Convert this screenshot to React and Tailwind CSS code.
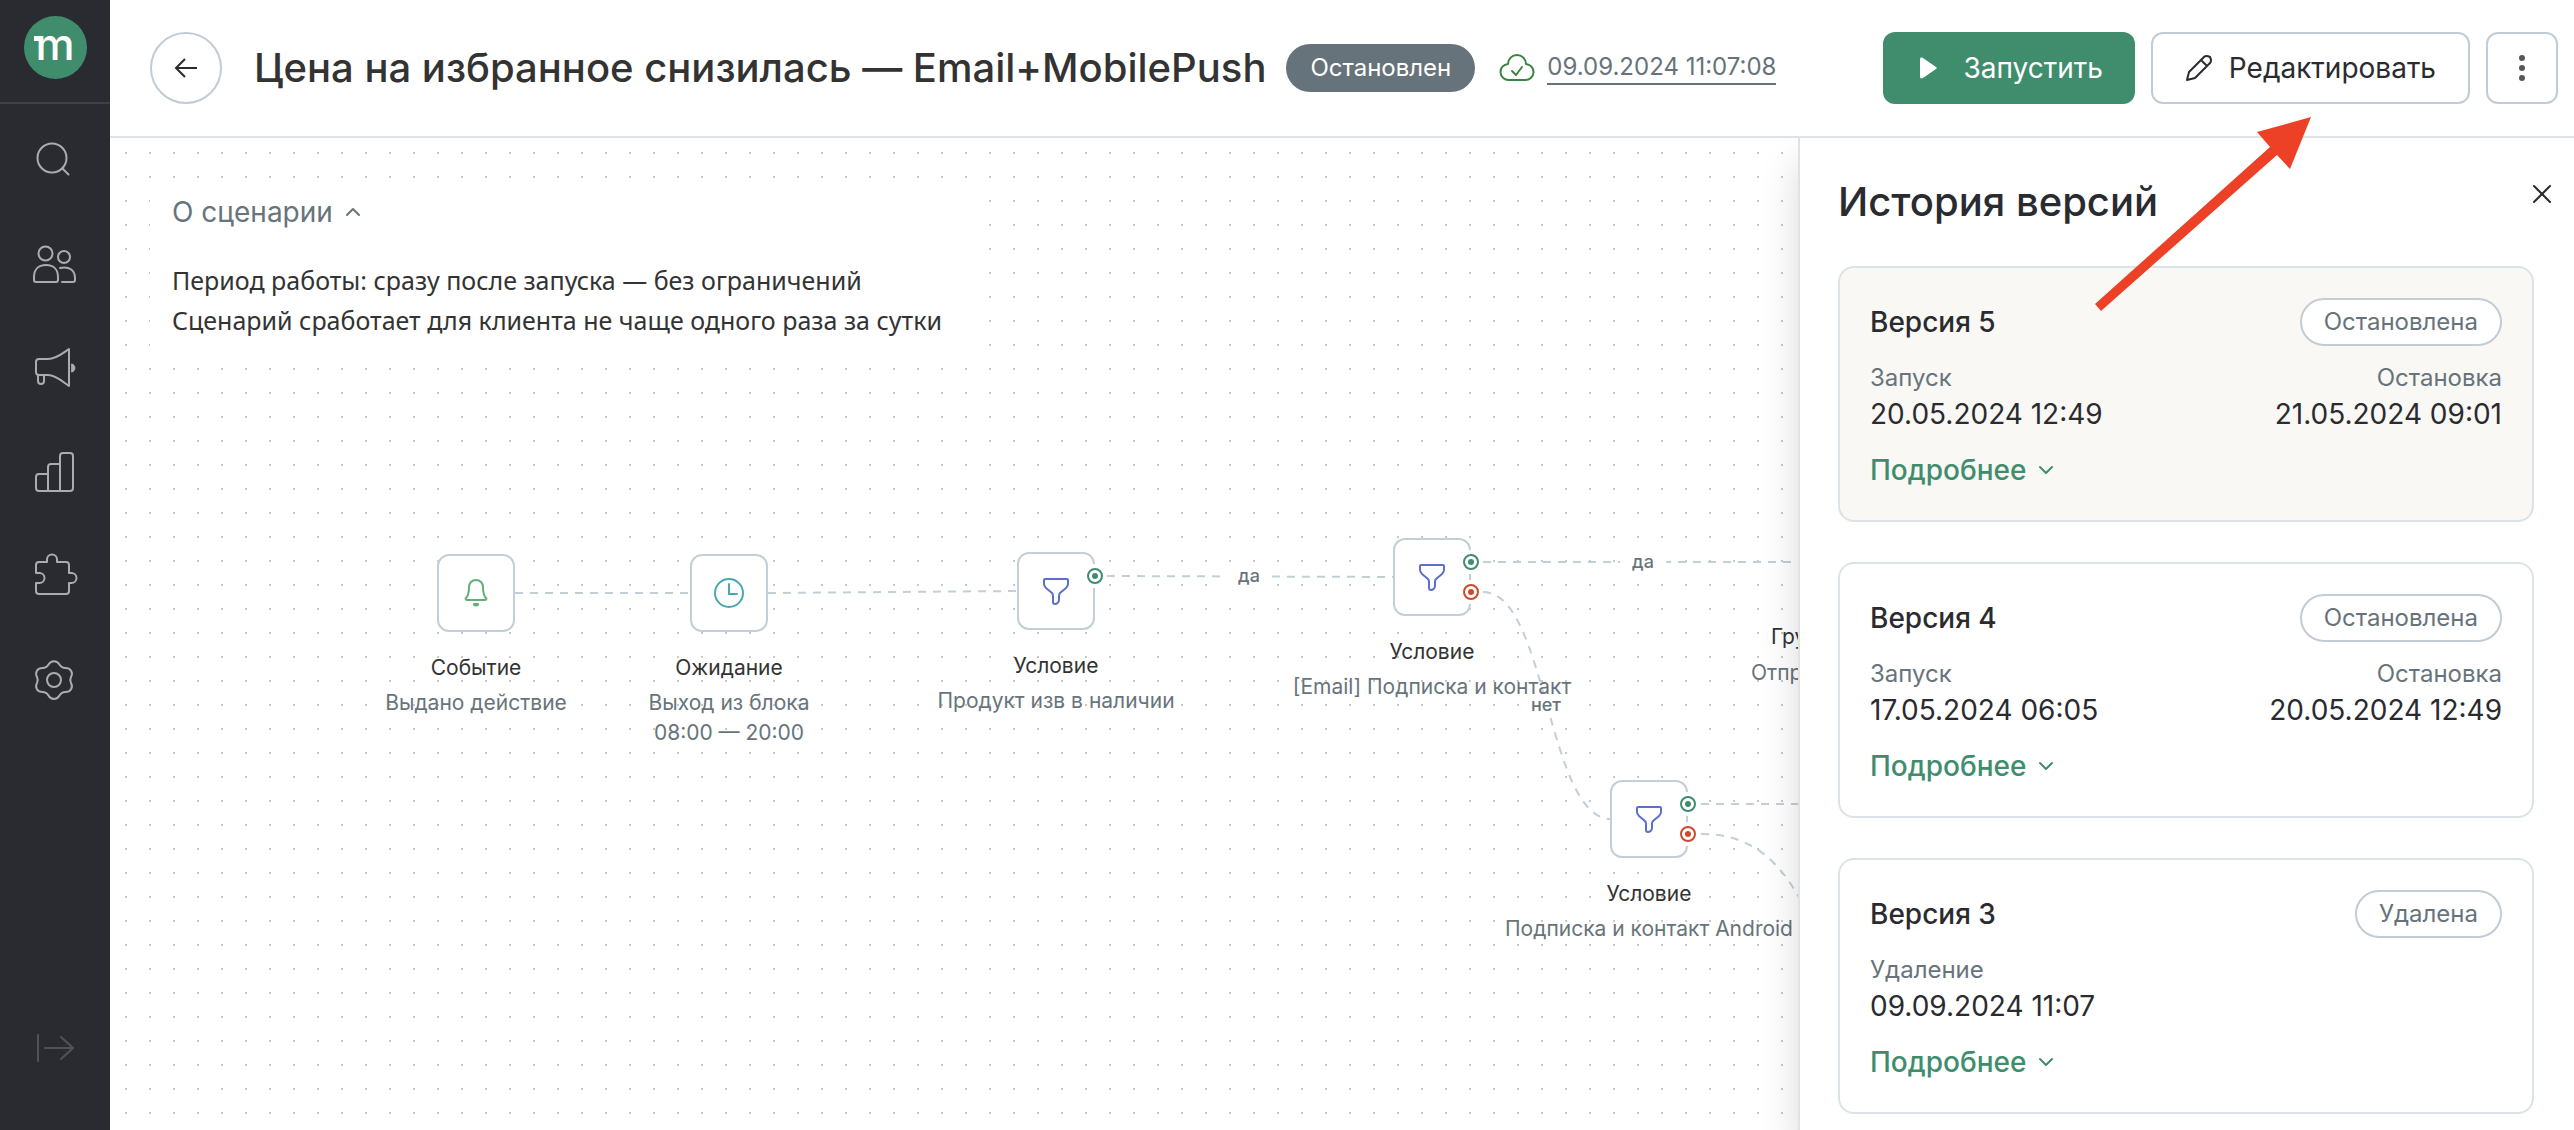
import { ChevronDown, ChevronUp, X } from 'lucide-react';

const versions = [
  {
    name: 'Версия 5',
    status: 'Остановлена',
    current: true,
    dates: [
      { label: 'Запуск', value: '20.05.2024 12:49' },
      { label: 'Остановка', value: '21.05.2024 09:01' },
    ],
  },
  {
    name: 'Версия 4',
    status: 'Остановлена',
    dates: [
      { label: 'Запуск', value: '17.05.2024 06:05' },
      { label: 'Остановка', value: '20.05.2024 12:49' },
    ],
  },
  {
    name: 'Версия 3',
    status: 'Удалена',
    dates: [{ label: 'Удаление', value: '09.09.2024 11:07' }],
  },
];

// Coordinates are relative to the canvas, x/y is the top left corner of the square
const nodes = [
  { id: 1, x: 327, y: 416, icon: 'bell', title: 'Событие', lines: ['Выдано действие'], ports: [] },
  { id: 2, x: 580, y: 416, icon: 'clock', title: 'Ожидание', lines: ['Выход из блока', '08:00 — 20:00'], ports: [] },
  { id: 3, x: 907, y: 414, icon: 'filter', title: 'Условие', lines: ['Продукт изв в наличии'], ports: ['yes'] },
  { id: 4, x: 1283, y: 400, icon: 'filter', title: 'Условие', lines: ['[Email] Подписка и контакт'], ports: ['yes', 'no'] },
  { id: 5, x: 1500, y: 642, icon: 'filter', title: 'Условие', lines: ['Подписка и контакт Android'], ports: ['yes', 'no'] },
];

const edges = [
  'M405 455H581',
  'M658 455L907 453',
  'M997 438L1283 439',
  'M1373 424H1700',
  'M1373 454C1437 454 1437 681 1501 681',
  'M1591 666H1700',
  'M1591 696C1642 696 1675 722 1705 792',
];

const edgeLabels = [
  { x: 1139, y: 438, text: 'да' },
  { x: 1533, y: 424, text: 'да' },
  { x: 1436, y: 567, text: 'нет' },
];

function SideIcon({ name }) {
  const paths = {
    search: (
      <>
        <circle cx="19" cy="20" r="14.5" />
        <path d="M29.5 30.5l6 6" />
      </>
    ),
    people: (
      <>
        <circle cx="12.5" cy="11.5" r="7" />
        <circle cx="31" cy="15" r="6" />
        <path d="M1 35c0-7 4-12 12-12s12 5 12 12v3c0 1-1 2-2 2H3c-1 0-2-1-2-2z" />
        <path d="M27 26c9-2 15 2 15 10v2c0 1-1 2-2 2H29" />
      </>
    ),
    megaphone: (
      <>
        <path d="M3 16c0-2 1-3 3-3h9c8 0 15-6 21-10v37c-6-4-13-11-21-11H6c-2 0-3-1-3-3z" />
        <path d="M5 29v6c0 4 6 4 6 0v-6" />
        <path d="M39 18c4 1 4 7 0 8z" fill="currentColor" strokeWidth="1" />
      </>
    ),
    chart: (
      <>
        <path d="M15 41H6c-2 0-3-1-3-3V27c0-2 1-3 3-3h9" />
        <path d="M15 41V17c0-2 1-3 3-3h9v27z" />
        <path d="M27 41V6c0-2 1-3 3-3h7c2 0 3 1 3 3v32c0 2-1 3-3 3z" />
      </>
    ),
    puzzle: (
      <path d="M3 19v-8c0-2 1-3 3-3h8V5.500a5 5 0 0 1 10 0V8h9c2 0 3 1 3 3v8h2.500a5 5 0 0 1 0 10H36v8c0 2-1 3-3 3H6c-2 0-3-1-3-3v-8h3.500a5 5 0 0 0 0-10z" />
    ),
    gear: (
      <>
        <circle cx="21" cy="22" r="7" />
        <path d="M15.500 6.500c2.500-4.500 8.500-4.500 11 0 1.500 2.500 3.500 3.500 6 3.500 5 0 8 4.500 5.500 9-1 2-1 4 0 6 2.500 4.500-.5 9-5.500 9-2.500 0-4.500 1-6 3.500-2.500 4.500-8.500 4.500-11 0-1.500-2.500-3.500-3.500-6-3.500-5 0-8-4.500-5.500-9 1-2 1-4 0-6-2.500-4.500.5-9 5.500-9 2.500 0 4.500-1 6-3.500z" />
      </>
    ),
    expand: (
      <>
        <path d="M5 11v26" />
        <path d="M12 24h28M28 13l12 11-12 11" />
      </>
    ),
  };

  return (
    <svg className="size-11 overflow-visible" viewBox="0 0 44 44" fill="none" stroke="currentColor" strokeWidth="2" strokeLinecap="round" strokeLinejoin="round" aria-hidden="true">
      {paths[name]}
    </svg>
  );
}

function NodeIcon({ name }) {
  if (name === 'bell') {
    return (
      <svg className="size-8 text-[#62ae77]" viewBox="0 0 32 32" fill="none" stroke="currentColor" strokeWidth="2" strokeLinejoin="round" aria-hidden="true">
        <path d="M9 10c0-4 3-7 7-7s7 3 7 7c0 7 1 9 3 11 1 1 0 2-1 2H7c-1 0-2-1-1-2 2-2 3-4 3-11z" />
        <path d="M14 27h4c0 2-4 2-4 0z" fill="currentColor" />
      </svg>
    );
  }
  if (name === 'clock') {
    return (
      <svg className="size-8 text-[#47a8af]" viewBox="0 0 32 32" fill="none" stroke="currentColor" strokeWidth="2" strokeLinecap="round" aria-hidden="true">
        <circle cx="16" cy="16" r="14" />
        <path d="M16 7v10h8" />
      </svg>
    );
  }
  return (
    <svg className="size-8 text-[#5a70cc]" viewBox="0 0 32 32" fill="none" stroke="currentColor" strokeWidth="2" strokeLinejoin="round" aria-hidden="true">
      <path d="M5 4h22c1 0 1 1 1 1v4c0 2-1 3-2 4l-6 5c-1 1-1 2-1 3v4c0 2-2 4-4 4-1 0-2 0-2-2v-6c0-1 0-2-1-3l-6-5C5 12 4 11 4 9V5s0-1 1-1z" />
    </svg>
  );
}

function Port({ type }) {
  return (
    <span className="flex size-6 items-center justify-center rounded-full bg-white">
      <span className={`flex size-4 items-center justify-center rounded-full border-2 ${type === 'yes' ? 'border-[#3f8d6e]' : 'border-[#d04a2a]'}`}>
        <span className={`size-1.5 rounded-full ${type === 'yes' ? 'bg-[#3f8d6e]' : 'bg-[#d04a2a]'}`} />
      </span>
    </span>
  );
}

function FlowNode({ node }) {
  return (
    <div className="absolute flex w-[78px] flex-col items-center" style={{ left: node.x, top: node.y }}>
      <div className="relative flex size-[78px] items-center justify-center rounded-xl border-2 border-[#c3cfd7] bg-white">
        <NodeIcon name={node.icon} />
        <div className="absolute top-2.5 -right-3.5 flex flex-col gap-1.5">
          {node.ports.map((type) => (
            <Port key={type} type={type} />
          ))}
        </div>
      </div>
      <p className="mt-5 text-[21px] leading-8 whitespace-nowrap text-[#333]">{node.title}</p>
      <div className="mt-1 text-center text-[21px] leading-[30px] whitespace-nowrap text-[#67747b]">
        {node.lines.map((line) => (
          <p key={line}>{line}</p>
        ))}
      </div>
    </div>
  );
}

function Sidebar() {
  const items = [
    ['search', 'Поиск'],
    ['people', 'Клиенты'],
    ['megaphone', 'Кампании'],
    ['chart', 'Отчёты'],
    ['puzzle', 'Интеграции'],
    ['gear', 'Настройки'],
  ];

  return (
    <nav className="flex w-[110px] shrink-0 flex-col items-center bg-[#2a2b30] text-[#acacae]">
      <a href="#" className="flex h-[104px] w-full justify-center border-b-2 border-[#404146] pt-4">
        <span className="relative flex size-[63px] items-center justify-center rounded-full bg-[#408d6e] pb-2 text-[44px] leading-none font-medium text-white">
          m
          <span className="absolute top-5 left-2.5 size-[5px] bg-white" />
        </span>
      </a>
      <div className="flex flex-col pt-1">
        {items.map(([name, label]) => (
          <button key={name} type="button" aria-label={label} className="flex h-[104px] w-[110px] items-center justify-center">
            <SideIcon name={name} />
          </button>
        ))}
      </div>
      <button type="button" aria-label="Развернуть меню" className="mt-auto mb-8 flex h-[104px] w-full items-center justify-center text-[#515257]">
        <SideIcon name="expand" />
      </button>
    </nav>
  );
}

function Header() {
  return (
    <header className="z-10 flex h-[138px] shrink-0 items-center border-b-2 border-[#dde3e7] bg-white pr-4 pl-10">
      <button type="button" aria-label="Назад" className="flex size-[72px] items-center justify-center rounded-full border-2 border-[#c1ccd5] text-[#2a2b30]">
        <svg className="size-6" viewBox="0 0 24 24" fill="none" stroke="currentColor" strokeWidth="2" aria-hidden="true">
          <path d="M23 12H2M11 3l-9 9 9 9" />
        </svg>
      </button>
      <h1 className="ml-8 text-[40px] leading-[48px] font-medium whitespace-nowrap text-[#333]">
        Цена на избранное снизилась — Email+MobilePush
      </h1>
      <span className="ml-5 flex h-12 items-center rounded-full bg-[#67737a] px-6 text-2xl text-white">Остановлен</span>
      <svg className="ml-6 h-8 w-9 text-[#3a8440]" viewBox="0 0 36 32" fill="none" stroke="currentColor" strokeWidth="2" strokeLinecap="round" strokeLinejoin="round" aria-hidden="true">
        <path d="M10 28a8 8 0 0 1-1-16a9 9 0 0 1 18 0a8 8 0 0 1-1 16z" />
        <path d="M13 19l4 4 6-8" />
      </svg>
      <a href="#" className="ml-3 border-b-2 border-[#67737a] text-2xl text-[#67737a]">09.09.2024 11:07:08</a>
      <div className="ml-auto flex gap-4 text-[28px]">
        <button type="button" className="flex h-[72px] items-center gap-6 rounded-xl bg-[#408d6e] px-8 text-white">
          <svg className="size-6" viewBox="0 0 24 24" fill="currentColor" aria-hidden="true">
            <path d="M5 3c0-1 1-2 3-1l13 9c1 1 1 1 0 2L8 22c-2 1-3 0-3-1z" />
          </svg>
          Запустить
        </button>
        <button type="button" className="flex h-[72px] items-center gap-4 rounded-xl border-2 border-[#c1ccd5] px-8 text-[#2a2b30]">
          <svg className="size-7" viewBox="0 0 28 28" fill="none" stroke="currentColor" strokeWidth="2" strokeLinejoin="round" aria-hidden="true">
            <path d="M2 26l2-8L19 3c2-2 4-1 6 0 1 2 2 4 0 6L10 24zM16 6l6 6" />
          </svg>
          Редактировать
        </button>
        <button type="button" aria-label="Ещё" className="flex size-[72px] flex-col items-center justify-center gap-1 rounded-xl border-2 border-[#c1ccd5]">
          <span className="size-1.5 rounded-full bg-[#55565a]" />
          <span className="size-1.5 rounded-full bg-[#55565a]" />
          <span className="size-1.5 rounded-full bg-[#55565a]" />
        </button>
      </div>
    </header>
  );
}

function Canvas() {
  return (
    <main className="relative min-w-0 flex-1 overflow-hidden bg-white bg-[radial-gradient(circle,#c8c8c8_1px,transparent_1px)] bg-size-[24px_24px] bg-position-[4px_3px]">
      <svg className="absolute inset-0 size-full" fill="none" stroke="#c3cfd6" strokeWidth="2" strokeDasharray="8 7" aria-hidden="true">
        {edges.map((d) => (
          <path key={d} d={d} />
        ))}
      </svg>
      {edgeLabels.map((label) => (
        <span
          key={`${label.x}-${label.y}`}
          className="absolute -translate-x-1/2 -translate-y-1/2 bg-white px-3 text-lg leading-6 font-medium text-[#67747b]"
          style={{ left: label.x, top: label.y }}>
          {label.text}
        </span>
      ))}
      {nodes.map((node) => (
        <FlowNode key={node.id} node={node} />
      ))}
      {/* Node that is mostly hidden behind the history panel */}
      <div className="absolute top-[483px] left-[1641px] text-[21px] leading-8 whitespace-nowrap">
        <p className="pl-5 text-[#333]">Гру</p>
        <p className="mt-1 text-[#67747b]">Отпр</p>
      </div>

      <section className="relative mt-10 ml-10 w-fit bg-white pr-7 pb-4 pl-[22px]">
        <button type="button" className="flex h-[68px] items-center gap-2 text-[28px] text-[#67747b]">
          О сценарии
          <ChevronUp className="size-6" strokeWidth={2} />
        </button>
        <div className="mt-3.5 font-['Noto_Sans',sans-serif] text-[25px] leading-10 text-[#333]">
          <p>Период работы: сразу после запуска — без ограничений</p>
          <p>Сценарий сработает для клиента не чаще одного раза за сутки</p>
        </div>
      </section>
    </main>
  );
}

function VersionCard({ version }) {
  return (
    <article className={`rounded-2xl border-2 border-[#dbe3e7] px-[30px] pt-[30px] pb-8 ${version.current ? 'bg-[#f9f8f4]' : 'bg-white'}`}>
      <div className="flex items-center justify-between">
        <h3 className="text-[28px] font-medium">{version.name}</h3>
        <span className="flex h-12 items-center rounded-full border-2 border-[#c1ccd5] bg-white px-[22px] text-2xl text-[#67737a]">{version.status}</span>
      </div>
      <dl className="mt-3.5 flex justify-between">
        {version.dates.map((date) => (
          <div key={date.label} className="last:not-first:text-right">
            <dt className="text-2xl leading-9 text-[#67747b]">{date.label}</dt>
            <dd className="text-[28px] leading-9">{date.value}</dd>
          </div>
        ))}
      </dl>
      <button type="button" className="mt-5 flex items-center gap-2 text-[28px] leading-9 font-medium text-[#408d6e]">
        Подробнее
        <ChevronDown className="size-6" strokeWidth={2} />
      </button>
    </article>
  );
}

function HistoryPanel() {
  return (
    <aside className="relative w-[776px] shrink-0 border-l-2 border-[#dde3e7] bg-white pr-10 pl-[38px] text-[#2a2b30] shadow-[0_24px_36px_rgba(0,0,0,0.15)]">
      <div className="flex h-32 items-center justify-between">
        <h2 className="text-[40px] font-medium">История версий</h2>
        <button type="button" aria-label="Закрыть" className="-mr-6 mb-4 flex size-8 items-center justify-center">
          <X className="size-8" strokeWidth={1.5} />
        </button>
      </div>
      <div className="flex flex-col gap-10">
        {versions.map((version) => (
          <VersionCard key={version.name} version={version} />
        ))}
      </div>
    </aside>
  );
}

export default function App() {
  return (
    <div className="relative flex h-screen overflow-hidden bg-white font-['Inter',sans-serif]">
      <Sidebar />
      <div className="flex min-w-0 flex-1 flex-col">
        <Header />
        <div className="flex min-h-0 flex-1">
          <Canvas />
          <HistoryPanel />
        </div>
      </div>

      {/* Pointer to the edit button */}
      <svg className="pointer-events-none absolute top-[112px] right-[258px] z-20 h-[204px] w-[226px]" viewBox="0 0 226 204" fill="#ec4126" aria-hidden="true">
        <path d="M221 5L167 20l13 15L5 192l6 7L187 43l13 14z" />
      </svg>
    </div>
  );
}
